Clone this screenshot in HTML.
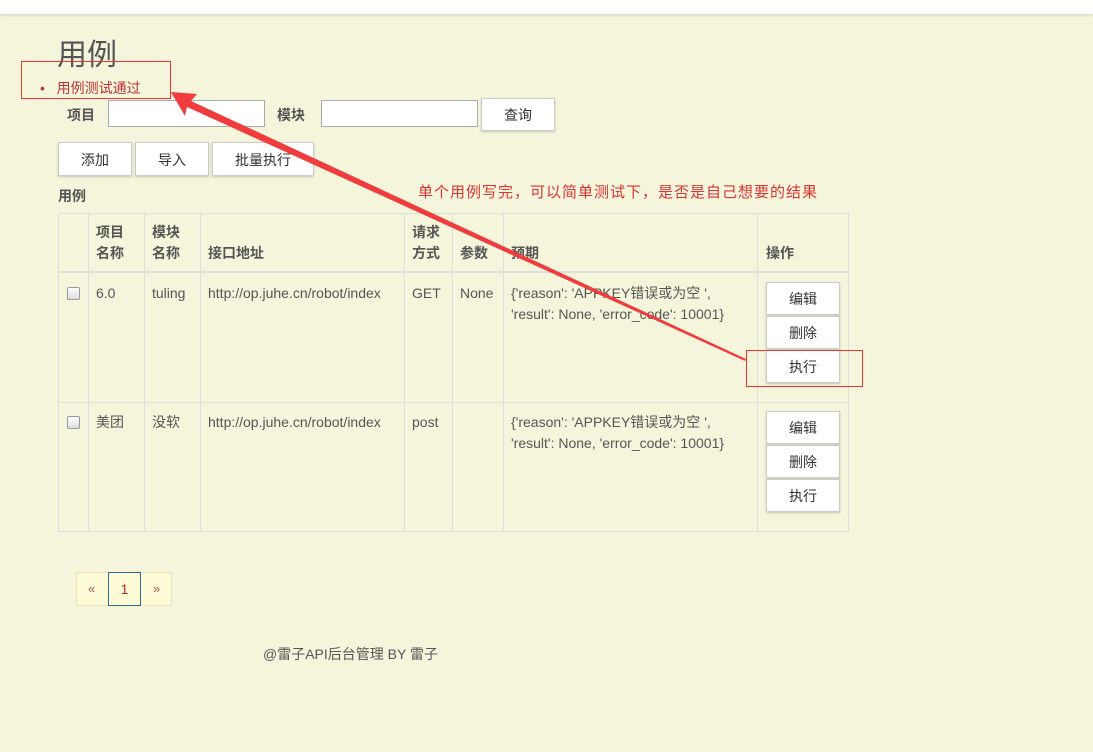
<!DOCTYPE html>
<html><head><meta charset="utf-8"><style>
body{margin:0;width:1093px;height:752px;background:#f5f5dc;position:relative;overflow:hidden;font-family:"Liberation Sans","Noto Sans CJK SC",sans-serif;font-size:14px;color:#555}
.a{position:absolute}
.btn{position:absolute;background:#fff;border:1px solid #ccc;box-shadow:0 1px 2px rgba(0,0,0,.2);text-align:center;font-size:14px;color:#333;box-sizing:border-box}
.inp{position:absolute;background:#fff;border:1px solid #aaa;box-sizing:border-box}
.v{position:absolute;top:213px;width:1px;height:318px;background:#ddd}
.h{position:absolute;left:58px;width:791px;height:1px;background:#ddd}
.th{position:absolute;font-weight:bold;color:#555;line-height:21px}
.td{position:absolute;color:#555;line-height:21px}
.cb{position:absolute;width:11px;height:11px;border:1px solid #999;border-radius:2px;background:linear-gradient(#fff,#ddd)}
</style></head><body>
<div class="a" style="left:0;top:0;width:1093px;height:14px;background:#fff;box-shadow:0 1px 3px rgba(0,0,0,.15)"></div>
<div class="a" style="left:57px;top:30px;font-size:30px;color:#555">用例</div>
<div class="a" style="left:21px;top:61px;width:148px;height:36px;border:1px solid #e33"></div>
<div class="a" style="left:40px;top:78px;font-size:14px;color:#b33">•&nbsp;&nbsp;&nbsp;用例测试通过</div>
<div class="a" style="left:67px;top:105px;font-weight:bold">项目</div>
<div class="inp" style="left:108px;top:100px;width:157px;height:27px"></div>
<div class="a" style="left:277px;top:105px;font-weight:bold">模块</div>
<div class="inp" style="left:321px;top:100px;width:157px;height:27px"></div>
<div class="btn" style="left:481px;top:98px;width:74px;height:33px;line-height:33px">查询</div>
<div class="btn" style="left:58px;top:142px;width:74px;height:34px;line-height:34px">添加</div>
<div class="btn" style="left:135px;top:142px;width:74px;height:34px;line-height:34px">导入</div>
<div class="btn" style="left:212px;top:142px;width:102px;height:34px;line-height:34px">批量执行</div>
<div class="a" style="left:58px;top:186px;font-weight:bold">用例</div>
<div class="a" style="left:418px;top:181px;font-size:15px;color:#d33;letter-spacing:1px">单个用例写完，可以简单测试下，是否是自己想要的结果</div>
<div class="h" style="top:213px"></div><div class="h" style="top:271px;height:2px"></div><div class="h" style="top:402px"></div><div class="h" style="top:531px"></div>
<div class="v" style="left:58px"></div><div class="v" style="left:88px"></div><div class="v" style="left:144px"></div><div class="v" style="left:200px"></div><div class="v" style="left:404px"></div><div class="v" style="left:452px"></div><div class="v" style="left:503px"></div><div class="v" style="left:757px"></div><div class="v" style="left:848px"></div>
<div class="th" style="left:96px;top:222px">项目<br>名称</div>
<div class="th" style="left:152px;top:222px">模块<br>名称</div>
<div class="th" style="left:208px;top:243px">接口地址</div>
<div class="th" style="left:412px;top:222px">请求<br>方式</div>
<div class="th" style="left:460px;top:243px">参数</div>
<div class="th" style="left:511px;top:243px">预期</div>
<div class="th" style="left:766px;top:243px">操作</div>
<div class="cb" style="left:67px;top:287px"></div>
<div class="td" style="left:96px;top:283px">6.0</div>
<div class="td" style="left:152px;top:283px">tuling</div>
<div class="td" style="left:208px;top:283px">http://op.juhe.cn/robot/index</div>
<div class="td" style="left:412px;top:283px">GET</div>
<div class="td" style="left:460px;top:283px">None</div>
<div class="td" style="left:511px;top:283px">{'reason': 'APPKEY错误或为空 ',<br>'result': None, 'error_code': 10001}</div>
<div class="btn" style="left:766px;top:282px;width:74px;height:33px;line-height:33px">编辑</div>
<div class="btn" style="left:766px;top:316px;width:74px;height:33px;line-height:33px">删除</div>
<div class="btn" style="left:766px;top:350px;width:74px;height:33px;line-height:33px">执行</div>
<div class="cb" style="left:67px;top:416px"></div>
<div class="td" style="left:96px;top:412px">美团</div>
<div class="td" style="left:152px;top:412px">没软</div>
<div class="td" style="left:208px;top:412px">http://op.juhe.cn/robot/index</div>
<div class="td" style="left:412px;top:412px">post</div>
<div class="td" style="left:511px;top:412px">{'reason': 'APPKEY错误或为空 ',<br>'result': None, 'error_code': 10001}</div>
<div class="btn" style="left:766px;top:411px;width:74px;height:33px;line-height:33px">编辑</div>
<div class="btn" style="left:766px;top:445px;width:74px;height:33px;line-height:33px">删除</div>
<div class="btn" style="left:766px;top:479px;width:74px;height:33px;line-height:33px">执行</div>
<div class="a" style="left:746px;top:350px;width:115px;height:35px;border:1px solid #e33"></div>
<svg class="a" style="left:0;top:0" width="1093" height="752">
<polygon points="171,92 197,94 191,101 746,359 745,361 187,107 185,116" fill="#f03c3c"/>
</svg>
<div class="a" style="left:76px;top:572px;width:96px;height:34px;background:#fdfbd5;border:1px solid #e6e3c0;box-sizing:border-box"></div>
<div class="a" style="left:88px;top:581px;color:#a55;font-size:13px">«</div>
<div class="a" style="left:108px;top:572px;width:33px;height:34px;border:1px solid #2a6a8a;box-sizing:border-box;text-align:center;line-height:33px;color:#a33">1</div>
<div class="a" style="left:153px;top:581px;color:#a55;font-size:13px">»</div>
<div class="a" style="left:263px;top:644px;color:#555">@雷子API后台管理 BY 雷子</div>
</body></html>
